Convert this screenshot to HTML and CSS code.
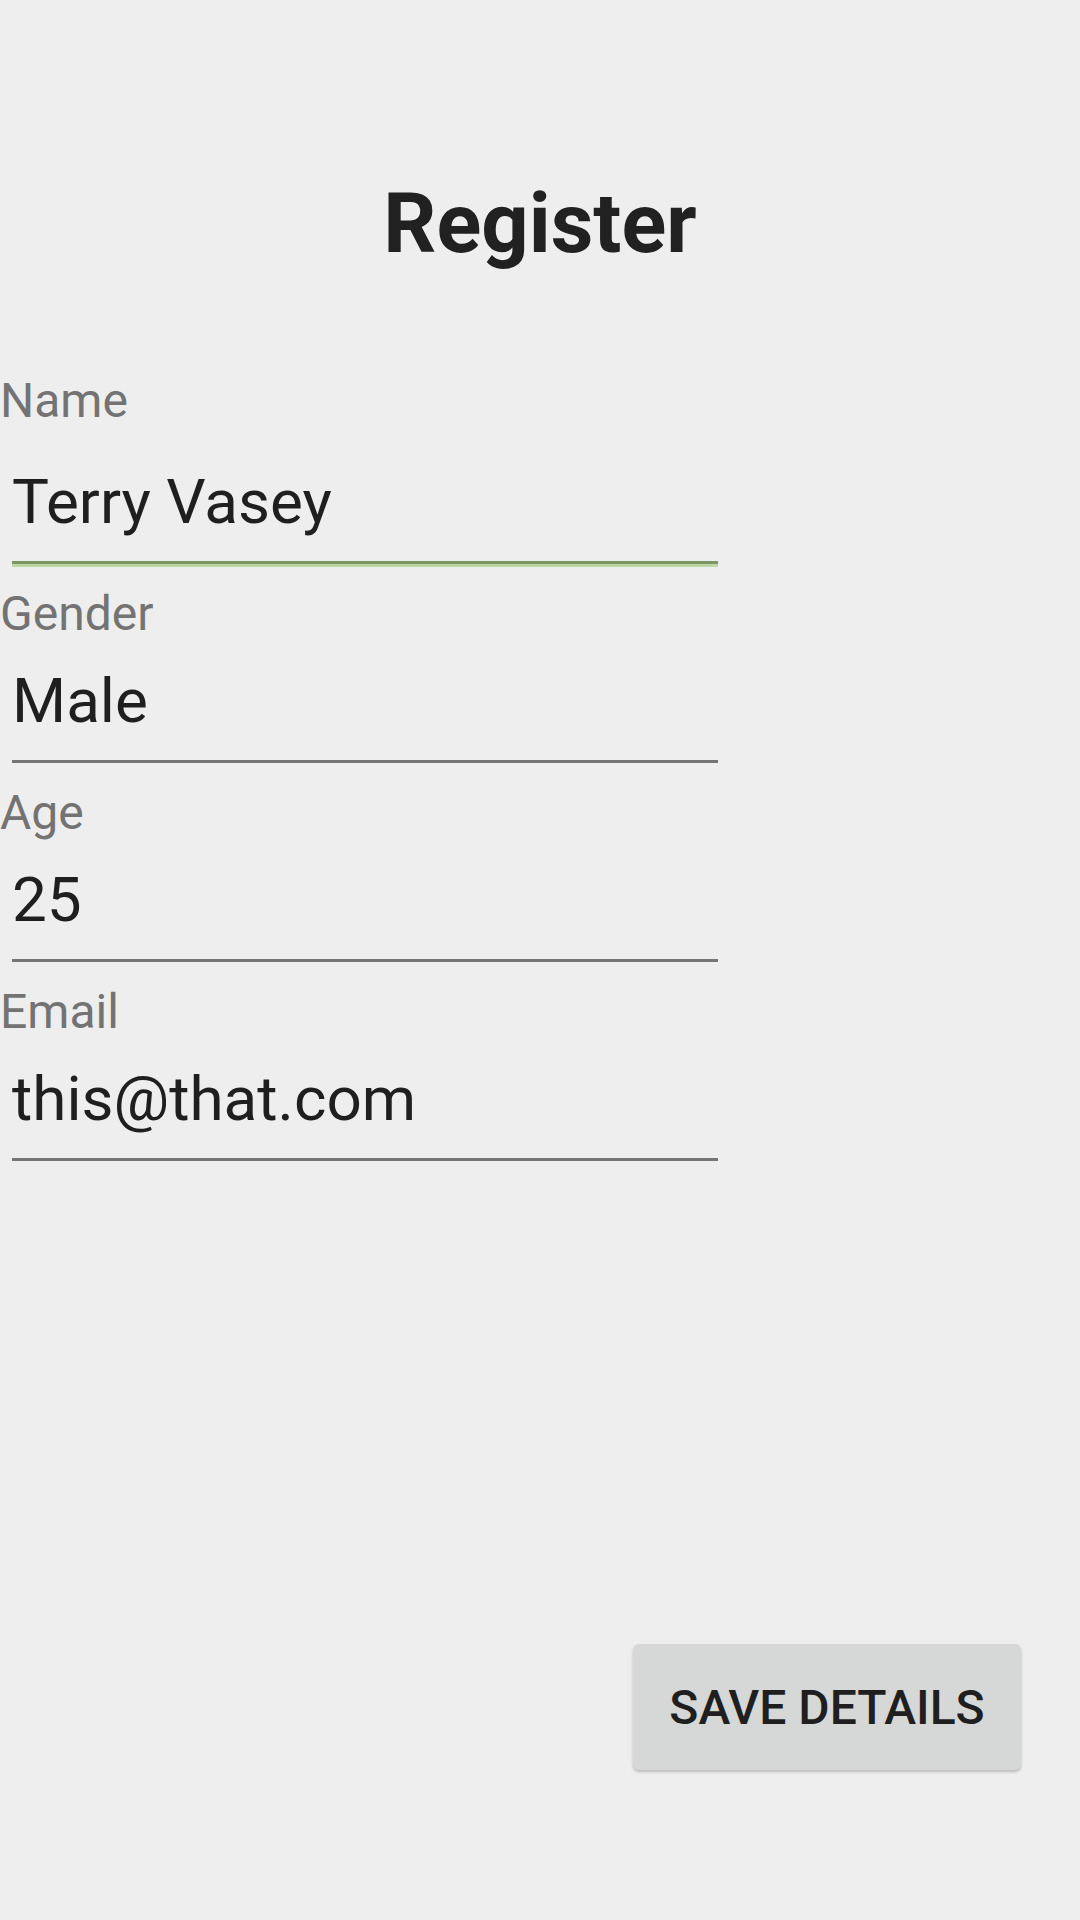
FILE: index.html
```html
<!DOCTYPE html>
<html>
<head>
<meta charset="utf-8">
<link rel="stylesheet" href="styles.css">
</head>
<body>
<div class="page">
  <h1 class="title">Register</h1>
  <div class="form">
    <div class="field">
      <div class="label label-first">Name</div>
      <div class="value">Terry Vasey</div>
      <div class="line line-focus"></div>
    </div>
    <div class="field">
      <div class="label">Gender</div>
      <div class="value">Male</div>
      <div class="line"></div>
    </div>
    <div class="field">
      <div class="label">Age</div>
      <div class="value">25</div>
      <div class="line"></div>
    </div>
    <div class="field">
      <div class="label">Email</div>
      <div class="value">this@that.com</div>
      <div class="line"></div>
    </div>
  </div>
  <div class="footer">
    <button class="btn">SAVE DETAILS</button>
  </div>
</div>
</body>
</html>
```
FILE: styles.css
```css
html, body {
  margin: 0;
  padding: 0;
  background: #eeeeee;
}
body {
  font-family: Roboto, "Liberation Sans", sans-serif;
}
.page {
  display: flex;
  flex-direction: column;
  min-height: 1920px;
  box-sizing: border-box;
}
.title {
  margin: 0;
  padding-top: 182px;
  font-size: 83px;
  line-height: 84px;
  font-weight: 700;
  color: #212121;
  text-align: center;
}
.form {
  display: flex;
  flex-direction: column;
  margin-top: 107px;
}
.field {
  display: flex;
  flex-direction: column;
  margin-bottom: 22px;
}
.label {
  font-size: 48px;
  line-height: 56px;
  color: #737373;
  margin-bottom: 22px;
}
.label-first {
  margin-bottom: 36px;
}
.value {
  font-size: 62px;
  line-height: 74px;
  color: #1f1f1f;
  padding-left: 12px;
  margin-bottom: 22px;
}
.line {
  margin-left: 12px;
  width: 706px;
  height: 3px;
  background: #757575;
}
.line-focus {
  background: #7a9764;
  box-shadow: 0 3px 0 #bcd7a4;
}
.footer {
  margin-top: auto;
  display: flex;
  justify-content: flex-end;
  padding-right: 59px;
  padding-bottom: 150px;
}
.btn {
  width: 388px;
  height: 126px;
  border: none;
  border-radius: 6px;
  background: #d6d7d7;
  box-shadow: 0 2px 3px rgba(0, 0, 0, 0.22);
  font-family: Roboto, "Liberation Sans", sans-serif;
  font-weight: 500;
  font-size: 48px;
  color: #1f1f1f;
  padding: 0;
}
```
